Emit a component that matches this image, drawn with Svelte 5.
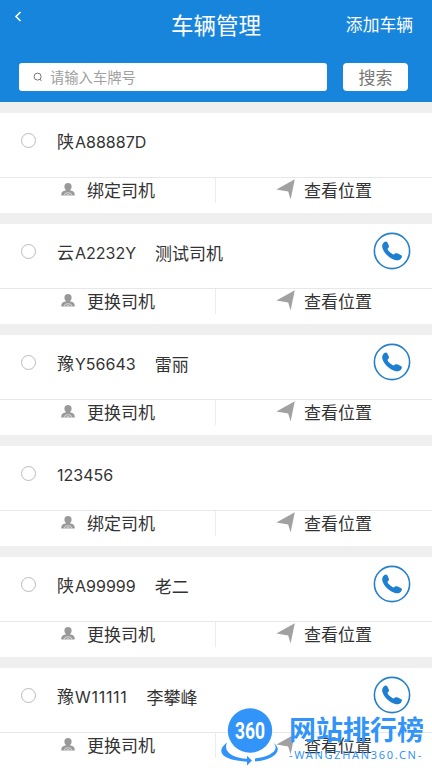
<script lang="ts">
  interface Vehicle {
    province: string
    plate: string
    driver?: string
    action: string
  }

  const vehicles: Vehicle[] = [
    { province: '陕', plate: 'A88887D', action: '绑定司机' },
    { province: '云', plate: 'A2232Y', driver: '测试司机', action: '更换司机' },
    { province: '豫', plate: 'Y56643', driver: '雷丽', action: '更换司机' },
    { province: '', plate: '123456', action: '绑定司机' },
    { province: '陕', plate: 'A99999', driver: '老二', action: '更换司机' },
    { province: '豫', plate: 'W11111', driver: '李攀峰', action: '更换司机' },
  ]

  let keyword = $state('')
</script>

<div class="page">
  <header>
    <div class="nav">
      <button class="back" aria-label="返回">
        <svg width="8" height="12" viewBox="0 0 8 12"><path d="M6.500 1 2 5.500 6.500 10" /></svg>
      </button>
      <h1>车辆管理</h1>
      <button class="add">添加车辆</button>
    </div>
    <div class="search">
      <label class="field">
        <svg width="10" height="10" viewBox="0 0 10 10">
          <circle cx="4.600" cy="4.600" r="3.500" />
          <path d="M6.800 7 8.500 9" />
        </svg>
        <input placeholder="请输入车牌号" bind:value={keyword} />
      </label>
      <button class="submit">搜索</button>
    </div>
  </header>

  <main>
    {#each vehicles as v}
      <section class="card">
        <div class="info">
          <span class="radio"></span>
          <span class="plate">
            {#if v.province}<span class="province">{v.province}</span>{/if}<span class="number" class:narrow={v.plate.includes('111')}>{v.plate}</span>
          </span>
          {#if v.driver}
            <span class="driver">{v.driver}</span>
            <button class="call" aria-label="拨打电话">
              <svg width="38" height="38" viewBox="0 0 38 38">
                <circle cx="19" cy="19" r="17.600" />
                <path d="M10 11.500c1.200-1.900 3-2.600 4.100-1.500l1.700 3.500c.5 1.200.1 2-1.100 2.900-.5.500.2 1.900 1.500 3.200 1.500 1.500 2.900 2.500 4.200 2.900.7.100 1.300-.9 2.200-1.200.7-.2 1.400 0 2.200.3l3.400 1.700c1.300.8.8 2.300-.5 3.600-1.700 1.600-4 1.700-6.400.8-5-1.800-9.700-6-11.500-10.700-.9-2.300-.8-4 .2-5.500Z" />
              </svg>
            </button>
          {/if}
        </div>
        <div class="actions">
          <button class="bind">
            <svg width="14" height="13" viewBox="0 0 14 13">
              <circle cx="7" cy="3.700" r="3.600" />
              <path d="M5 6h4v1.200l2.500.8c1.500.6 2.300 2.200 2.300 4.500H.2C.2 10.200 1 8.600 2.500 8L5 7.200Z" />
              <path class="seam" d="m3.200 12.500 1-2.200q2.800-1.300 5.600 0l1 2.200M5.600 11.700h2.800" />
            </svg>
            {v.action}
          </button>
          <button class="locate">
            <svg width="20" height="21" viewBox="0 0 20 21"><path d="M18.800.2 14.600 20.600 12.200 12.600.4 10.600Z" /></svg>
            查看位置
          </button>
        </div>
      </section>
    {/each}
  </main>

  <div class="watermark">
    <svg width="60" height="60" viewBox="0 0 60 60">
      <circle cx="30" cy="22.500" r="22.200" />
      <path d="M7 34.500C-3 42 .5 49 14 52q6 1.400 13 1.700v3.800l5-5-5-4.800v3C15 50 2.500 45 7 34.500Z" />
      <path d="M53 34.500c7.500 7-2 14-18 16v3.100C54 51.500 64.500 42.500 53 34.500Z" />
      <text x="30" y="31" textLength="30" lengthAdjust="spacingAndGlyphs">360</text>
    </svg>
    <div class="brand">
      <strong>网站排行榜</strong>
      <small>-WANGZHAN360.CN-</small>
    </div>
  </div>
</div>

<style>
  :global(body) {
    background: #efefef;
    overflow: hidden;
  }
  .page {
    position: relative;
    height: 768px;
    overflow: hidden;
    color: #333;
    font: 17px/1 "Noto Sans CJK SC", sans-serif;
  }
  button {
    padding: 0;
    border: none;
    background: none;
    color: inherit;
    font: inherit;
    line-height: 1;
    white-space: nowrap;
  }
  svg {
    display: block;
    flex-shrink: 0;
  }

  header {
    box-sizing: border-box;
    height: 102px;
    background: #1885dd;
    color: #fff;
  }
  .nav {
    display: grid;
    grid-template-columns: 1fr auto 1fr;
    align-items: center;
    height: 49px;
    padding: 0 19px 0 14px;
  }
  .back {
    align-self: start;
    justify-self: start;
    margin-top: 11px;
  }
  .back path {
    fill: none;
    stroke: #fff;
    stroke-width: 1.600;
  }
  h1 {
    margin: 0 0 0 5px;
    font-size: 22.500px;
    font-weight: 400;
    line-height: 1;
  }
  .add {
    justify-self: end;
    font-size: 16.800px;
  }
  .search {
    display: flex;
    gap: 16px;
    padding: 14px 24px 0 19px;
  }
  .field {
    flex: 1;
    display: flex;
    align-items: center;
    gap: 7px;
    height: 28px;
    padding-left: 14px;
    border-radius: 3px;
    background: #fff;
  }
  .field svg {
    fill: none;
    stroke: #777;
    stroke-width: 1;
  }
  input {
    flex: 1;
    min-width: 0;
    padding: 0;
    border: none;
    outline: none;
    background: none;
    font: 14.300px/20px "Noto Sans CJK SC", sans-serif;
  }
  input::placeholder { color: #a0a0a0; }
  .submit {
    width: 65px;
    height: 28px;
    padding-bottom: 2px;
    border-radius: 4px;
    background: #fff;
    color: #777;
  }

  main {
    display: flex;
    flex-direction: column;
    gap: 11.500px;
    padding-top: 11px;
  }
  .card {
    height: 99.500px;
    background: #fff;
  }
  .info {
    display: flex;
    align-items: center;
    height: 64px;
    padding: 0 21px;
  }
  .radio {
    box-sizing: border-box;
    width: 15px;
    height: 15px;
    margin: 0 21px 10px 0;
    border: 1px solid #bbb;
    border-radius: 50%;
  }
  .plate, .driver { margin-top: -8px; }
  .province { margin-right: 1px; }
  .number {
    font-family: Inter, sans-serif;
    font-size: 16px;
  }
  .number.narrow { letter-spacing: 0.700px; }
  .driver { margin-left: 19px; }
  .call {
    margin: 0 0 10px auto;
  }
  .call circle {
    fill: none;
    stroke: #2781c7;
    stroke-width: 1.600;
  }
  .call path { fill: #1c7fd0; }

  .actions {
    display: grid;
    grid-template-columns: 1fr 1fr;
    height: 34.500px;
    border-top: 1px solid #e7e7e7;
  }
  .actions button {
    display: flex;
    align-items: center;
    box-sizing: border-box;
    height: 25px;
    padding-bottom: 2px;
  }
  .bind {
    gap: 12px;
    padding-left: 61px;
    border-right: 1px solid #ececec;
  }
  .bind svg { fill: #999; }
  .seam {
    fill: none;
    stroke: #fff;
    stroke-width: 0.600;
  }
  .locate {
    gap: 8px;
    padding-left: 60px;
  }
  .locate svg { fill: #a1a1a1; }

  .watermark {
    position: absolute;
    left: 220px;
    top: 708px;
    display: flex;
    color: #3294f8;
  }
  .watermark svg { fill: #3294f8; }
  .watermark text {
    fill: #fff;
    font: 700 24px "Roboto", sans-serif;
    text-anchor: middle;
  }
  .brand {
    display: flex;
    flex-direction: column;
    padding: 7px 0 0 9px;
  }
  .brand strong {
    font-size: 27px;
    font-weight: 700;
    line-height: 28px;
  }
  .brand small {
    margin-top: 6px;
    font: 11px/12px "Noto Sans", sans-serif;
    letter-spacing: 1.700px;
    white-space: nowrap;
  }
</style>
